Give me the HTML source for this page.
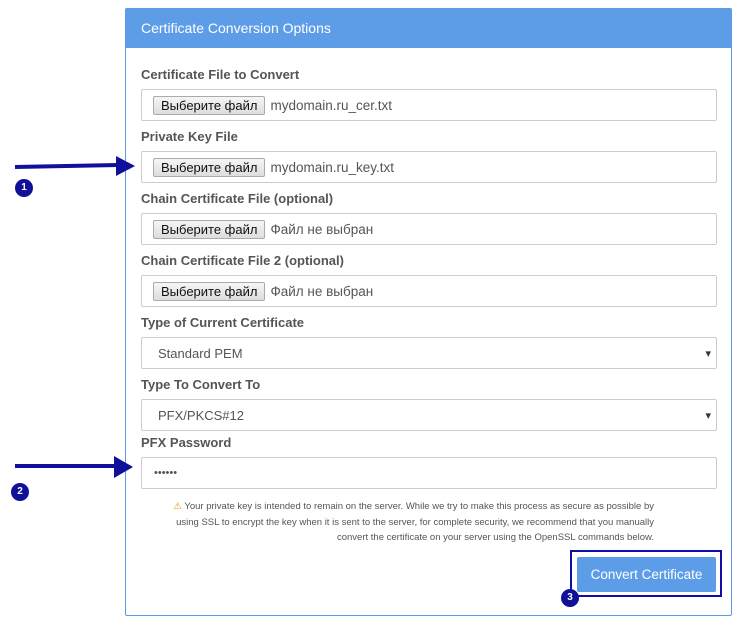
<!DOCTYPE html>
<html><head><meta charset="utf-8"><style>
body{margin:0;width:740px;height:624px;background:#fff;font-family:"Liberation Sans",sans-serif;position:relative;overflow:hidden}
.panel{position:absolute;left:125px;top:8px;width:605px;height:606px;border:1px solid #5b9be6;border-radius:2px}
.hd{height:39px;background:#5d9de8;color:#fff;font-size:14px;line-height:39px;padding-left:15px}
.lbl{position:absolute;left:141px;font-size:13px;font-weight:bold;color:#555}
.inp{position:absolute;left:141px;width:576px;height:32px;border:1px solid #ccc;border-radius:2px;font-size:13.5px;color:#555;box-sizing:border-box;display:flex;align-items:center}
.fb{margin-left:11px;border:1px solid #aaa;background:linear-gradient(#f6f6f6,#ddd);font-size:13px;color:#111;padding:1px 7px;border-radius:2px;margin-right:5px}
.sel{padding-left:16px;font-size:13px}
.sel:after{content:"▾";position:absolute;right:5px;font-size:11px;color:#333}
.warn{position:absolute;left:100px;width:554px;text-align:right;font-size:9.5px;color:#555;line-height:15.5px;top:499px;white-space:nowrap}
.btn{position:absolute;left:577px;top:557px;width:139px;height:35px;background:#5d9de8;color:#fff;font-size:13.5px;text-align:center;line-height:35px;border-radius:2px}
.box{position:absolute;left:570px;top:550px;width:148px;height:43px;border:2px solid #0d0da8}
.c{position:absolute;width:18px;height:18px;border-radius:50%;background:#10109a;color:#fff;font-size:10px;font-weight:bold;text-align:center;line-height:18px}
</style></head><body>
<div class="panel"><div class="hd">Certificate Conversion Options</div></div>
<div class="lbl" style="top:67px">Certificate File to Convert</div>
<div class="inp" style="top:89px"><span class="fb">Выберите файл</span>mydomain.ru_cer.txt</div>
<div class="lbl" style="top:129px">Private Key File</div>
<div class="inp" style="top:151px"><span class="fb">Выберите файл</span>mydomain.ru_key.txt</div>
<div class="lbl" style="top:191px">Chain Certificate File (optional)</div>
<div class="inp" style="top:213px"><span class="fb">Выберите файл</span>Файл не выбран</div>
<div class="lbl" style="top:253px">Chain Certificate File 2 (optional)</div>
<div class="inp" style="top:275px"><span class="fb">Выберите файл</span>Файл не выбран</div>
<div class="lbl" style="top:315px">Type of Current Certificate</div>
<div class="inp sel" style="top:337px">Standard PEM</div>
<div class="lbl" style="top:377px">Type To Convert To</div>
<div class="inp sel" style="top:399px">PFX/PKCS#12</div>
<div class="lbl" style="top:435px">PFX Password</div>
<div class="inp" style="top:457px;padding-left:12px;font-size:11px">••••••</div>
<div class="warn"><span style="color:#e0a000">⚠</span> Your private key is intended to remain on the server. While we try to make this process as secure as possible by<br>using SSL to encrypt the key when it is sent to the server, for complete security, we recommend that you manually<br>convert the certificate on your server using the OpenSSL commands below.</div>
<div class="box"></div>
<div class="btn">Convert Certificate</div>
<svg style="position:absolute;left:0;top:0" width="740" height="624">
<path d="M15 167 L118 165" stroke="#10109a" stroke-width="4"/><path d="M116 156 L135 166 L116 176 Z" fill="#10109a"/>
<path d="M15 466 L116 466" stroke="#10109a" stroke-width="4"/><path d="M114 456 L133 467 L114 478 Z" fill="#10109a"/>
</svg>
<div class="c" style="left:15px;top:179px">1</div>
<div class="c" style="left:11px;top:483px">2</div>
<div class="c" style="left:561px;top:589px">3</div>
</body></html>
